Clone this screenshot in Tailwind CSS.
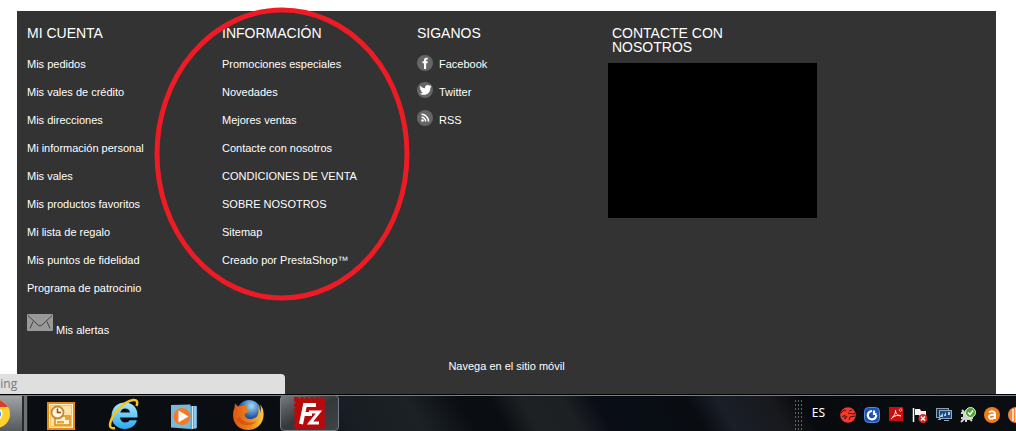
<!DOCTYPE html>
<html lang="es">
<head>
    <title>Tienda - pie de página</title>
    <meta charset="UTF-8" />
    <meta name="viewport" content="width=device-width, initial-scale=1.0"/>
    <script src="https://cdn.jsdelivr.net/npm/@tailwindcss/browser@4"></script>
</head>
<body class="relative flex h-screen flex-col overflow-hidden bg-white font-['Liberation_Sans',Arial,sans-serif]">

    <!-- Page footer -->
    <footer class="relative mt-[11px] mr-5 ml-[17px] flex-1 bg-[#333] pt-[15px] text-[11px] text-white">
        <div class="grid grid-cols-5 pr-1">
            <section class="pl-[10px]">
                <h2 class="mb-[10px] text-sm leading-[14px]">MI CUENTA</h2>
                <ul class="leading-7">
                    <li><a href="#">Mis pedidos</a></li>
                    <li><a href="#">Mis vales de crédito</a></li>
                    <li><a href="#">Mis direcciones</a></li>
                    <li><a href="#">Mi información personal</a></li>
                    <li><a href="#">Mis vales</a></li>
                    <li><a href="#">Mis productos favoritos</a></li>
                    <li><a href="#">Mi lista de regalo</a></li>
                    <li><a href="#">Mis puntos de fidelidad</a></li>
                    <li><a href="#">Programa de patrocinio</a></li>
                </ul>
                <a href="#" class="mt-3 flex items-end gap-[3px] leading-3">
                    <svg class="mb-[7px] h-[17px] w-[26px]" viewBox="0 0 26 17" fill="none">
                        <rect width="26" height="17" rx="1" fill="#999"/>
                        <path d="M1 1.500L11 11Q13 13 15 11L25 1.500" stroke="#444" stroke-width="1"/>
                        <path d="M3 14.500L6 7.500M23 14.500L20 7.500" stroke="#444" stroke-width="1"/>
                    </svg>
                    <span class="mb-[2px]">Mis alertas</span>
                </a>
            </section>

            <section class="pl-[10px]">
                <h2 class="mb-[10px] text-sm leading-[14px]">INFORMACIÓN</h2>
                <ul class="leading-7">
                    <li><a href="#">Promociones especiales</a></li>
                    <li><a href="#">Novedades</a></li>
                    <li><a href="#">Mejores ventas</a></li>
                    <li><a href="#">Contacte con nosotros</a></li>
                    <li><a href="#">CONDICIONES DE VENTA</a></li>
                    <li><a href="#">SOBRE NOSOTROS</a></li>
                    <li><a href="#">Sitemap</a></li>
                    <li><a href="#">Creado por PrestaShop™</a></li>
                </ul>
            </section>

            <section class="pl-[10px]">
                <h2 class="mb-[10px] text-sm leading-[14px]">SIGANOS</h2>
                <ul class="leading-7">
                    <li>
                        <a href="#" class="flex gap-[6px]">
                            <svg class="mt-[5px] size-4" viewBox="0 0 16 16">
                                <circle cx="8" cy="8" r="8" fill="#666"/>
                                <path d="M7 14V8.300H5.500V6.300H7V5C7 3.400 8 2.700 9.300 2.700H10.800V4.600H9.900C9.300 4.600 9.100 4.900 9.100 5.400V6.300H10.800L10.500 8.300H9.100V14Z" fill="#fff"/>
                            </svg>
                            Facebook
                        </a>
                    </li>
                    <li>
                        <a href="#" class="flex gap-[6px]">
                            <svg class="mt-1 size-4" viewBox="0 0 16 16">
                                <circle cx="8" cy="8" r="8" fill="#666"/>
                                <path d="M3 3.500C4.500 5.300 6 6 8 6.200C7.700 4.300 9 3 10.600 3C11.500 3 12 3.300 12.500 3.800L14 3.300L13.400 4.600L14.600 4.600L13.300 5.900C13.300 9.800 10.800 12.800 7 12.800C5.300 12.800 3.800 12.400 2.500 11.500C4 11.500 5 11.200 5.900 10.500C4.700 10.300 4 9.700 3.700 8.800H4.700C3.600 8.300 2.900 7.500 2.900 6.300L3.900 6.600C2.900 5.700 2.600 4.600 3 3.500Z" fill="#fff"/>
                            </svg>
                            Twitter
                        </a>
                    </li>
                    <li>
                        <a href="#" class="flex gap-[6px]">
                            <svg class="mt-1 size-4" viewBox="0 0 16 16" fill="none">
                                <circle cx="8" cy="8" r="8" fill="#666"/>
                                <circle cx="5.500" cy="10.500" r="1.300" fill="#fff"/>
                                <path d="M4.500 7.200A4 4 0 0 1 8.600 11.500M4.500 4.300A7 7 0 0 1 11.500 11.500" stroke="#fff" stroke-width="1.500"/>
                            </svg>
                            RSS
                        </a>
                    </li>
                </ul>
            </section>

            <section class="pl-[10px]">
                <h2 class="mb-[9px] text-sm leading-[14px]">CONTACTE CON NOSOTROS</h2>
                <div class="-ml-1 h-[155px] w-[209px] bg-black"></div>
            </section>
        </div>
        <p class="mt-[14px] text-center leading-7"><a href="#">Navega en el sitio móvil</a></p>
    </footer>

    <!-- Hand-drawn highlight -->
    <svg class="pointer-events-none absolute top-[7px] left-[154px] h-[294px] w-[256px]" viewBox="0 0 256 294" fill="none">
        <ellipse cx="128" cy="147" rx="125" ry="144" stroke="#ed1c24" stroke-width="5"/>
    </svg>

    <!-- Browser status bubble -->
    <div class="absolute bottom-[37px] left-0 flex h-5 w-[285px] justify-start overflow-hidden rounded-tr bg-[#dfdfdf] font-['Open_Sans','Noto_Sans',sans-serif] text-xs leading-5 text-[#777]">
        <span class="-ml-[7px]">ping</span>
    </div>

    <!-- Taskbar -->
    <nav class="flex h-[37px] shrink-0 items-stretch border-t border-black bg-[linear-gradient(60deg,#0a0e13_0%,#0a0e13_28%,#181d23_34%,#1c2125_41%,#0a0e12_46%,#0a0e12_49%,#1d2124_52%,#1c2023_56%,#0a0d17_59%,#090d12_68%,#1a1e27_71%,#17191d_76%,#080b0e_79%,#0a0e12_100%)] text-white shadow-[inset_0_1px_0_#7a8084]">
        <button aria-label="Chrome" class="mt-px w-6 overflow-hidden border-r-2 border-[#25292b] bg-linear-to-b from-[#a2a5a7] to-[#55595b]">
            <svg class="-ml-[18px] h-[28px] w-[28px] max-w-none" viewBox="0 0 28 28">
                <circle cx="14" cy="14" r="14" fill="#ffd12e"/>
                <path d="M1.900 7A14 14 0 0 1 26.100 7H14L8 17Z" fill="#dd3a2c"/>
                <path d="M1.900 7L9 18L14 21L11 28A14 14 0 0 1 1.900 7Z" fill="#3aa54a"/>
                <circle cx="14" cy="14" r="6.500" fill="#fff"/>
                <circle cx="14" cy="14" r="5" fill="#3d7fe0"/>
            </svg>
        </button>
        <div class="mt-px w-1 border-r border-[#222] bg-[#6e7274]"></div>

        <button aria-label="Outlook" class="ml-[19px] pt-[5px]">
            <svg class="size-7" viewBox="0 0 28 28" fill="none">
                <rect x="1" y="1" width="26" height="26" fill="#fff1cc" stroke="#e28b16" stroke-width="2"/>
                <rect x="3.500" y="3.500" width="21" height="21" fill="#fde3a4" stroke="#f6c45c"/>
                <rect x="8" y="14" width="15" height="9" fill="#fff3d5" stroke="#df8510" stroke-width="1.500"/>
                <path d="M10 19H17V21.500H10ZM18 15H22V18H18Z" fill="#eda52e"/>
                <circle cx="10.500" cy="10.500" r="6" fill="#fff6df" stroke="#c98735" stroke-width="1.800"/>
                <path d="M10.500 6.500V10.500H14" stroke="#86501b" stroke-width="1.500"/>
            </svg>
        </button>
        <button aria-label="Internet Explorer" class="ml-[33px] pt-[2px]">
            <svg class="h-8 w-[31px]" viewBox="0 0 31 32" fill="none">
                <defs>
                    <linearGradient id="ie" x1="0" y1="0" x2="0" y2="1">
                        <stop stop-color="#a9e9ff"/><stop offset="1" stop-color="#2ba7ee"/>
                    </linearGradient>
                </defs>
                <path d="M29.500 19.500H12C12.500 22.800 14.500 24.500 17.200 24.500C19.400 24.500 20.800 23.700 21.600 22.300H29C27.400 27.500 23.200 31 17 31C9 31 3.500 25.500 3.500 18C3.500 10.300 9 4.500 17 4.500C25.500 4.500 30.300 11 29.500 19.500ZM12.300 14.500H22C21.600 11.800 19.800 10.400 17.200 10.400C14.600 10.400 12.800 12 12.300 14.500Z" fill="url(#ie)"/>
                <path d="M7 30C3 31 1 29 2.500 24C5.500 14 16 3.500 25 2C29 1.400 30 4 28.500 8" stroke="#f6c61c" stroke-width="2.500"/>
            </svg>
        </button>
        <button aria-label="Windows Media Player" class="ml-8 pt-[8px]">
            <svg class="h-[26px] w-[27px]" viewBox="0 0 27 26">
                <path d="M6 2H26V24L20 25.500Z" fill="#5ba4cd"/>
                <path d="M21.500 2V25M24 2V24.500" stroke="#cdeafb" stroke-width="1"/>
                <path d="M0 1L19.500 .500V25L0 23.500Z" fill="#79b9d9"/>
                <circle cx="11" cy="12.500" r="8.500" fill="#f47a24"/>
                <path d="M7.500 6.500L17.500 12.500L7.500 18.500Z" fill="#fff"/>
            </svg>
        </button>
        <button aria-label="Firefox" class="ml-[34px] pt-[2px]">
            <svg class="h-[31px] w-8" viewBox="0 0 32 31">
                <defs>
                    <radialGradient id="globe" cx=".6" cy=".25">
                        <stop stop-color="#9fdcf6"/><stop offset="1" stop-color="#1d4f9e"/>
                    </radialGradient>
                    <linearGradient id="fox" x1="0" y1="0" x2="1" y2="0">
                        <stop stop-color="#dc5413"/><stop offset=".6" stop-color="#f18a1c"/><stop offset="1" stop-color="#fcca3c"/>
                    </linearGradient>
                </defs>
                <circle cx="17" cy="13" r="12" fill="url(#globe)"/>
                <path d="M3 4.500L6 7.500C8 6.500 10 6.500 11.500 7L15.500 5.500L14.500 9.500L17.500 12L13 14.500C12 17 14 19.500 17 20C20 20.500 23 19 25 17.500C27 14 27 10 25.500 7.500C27.500 9.500 28.500 12 28.500 14C29.500 11 29 7 27.500 5C30.500 8 32 11.500 31.500 17C31 25 24.500 31 16.500 31C7.500 31 1 25 1 16.500C1 13 1.500 11 2.500 9Z" fill="url(#fox)"/>
                <path d="M5 20C8 27 19 29 25 22C21 24 12 25 8 18Z" fill="#d1440e" opacity=".6"/>
            </svg>
        </button>
        <button aria-label="FileZilla" class="ml-4 flex w-[59px] justify-center rounded-sm border border-[#777d80] bg-linear-to-br from-[#777c7e] via-[#34383b] to-[#3f4447] pt-px">
            <svg class="h-[33px] w-[32px]" viewBox="0 0 32 33" fill="none">
                <rect x="1.500" y="1.500" width="29" height="30" fill="#b80a0a"/>
                <rect x="1.500" y="1.500" width="29" height="30" stroke="#b80a0a" stroke-width="3" stroke-dasharray="3 2"/>
                <path d="M7 27L11 8H22M9 17H18" stroke="#fff" stroke-width="4"/>
                <path d="M15 15H25L16 26H25" stroke="#fff" stroke-width="3"/>
            </svg>
        </button>

        <!-- Notification area -->
        <div class="ml-auto flex items-center gap-2">
            <div class="mt-1 h-8 w-2 bg-[radial-gradient(circle,#5c6265_1px,transparent_1px)] bg-[size:3px_4px]"></div>
            <span class="mr-[7px] ml-[2px] font-['Noto_Sans',sans-serif] text-xs">ES</span>
            <button aria-label="Antivirus" class="mt-1">
                <svg class="size-4" viewBox="0 0 16 16" fill="none">
                    <circle cx="8" cy="8" r="7.800" fill="#f23a30"/>
                    <path d="M1 6L4 3L6 4M9 4L12 3M2 10L5 8V12L7 9M8 6L13 7L15 6M9 13L10 10L15 9" stroke="#4a0d0a" stroke-width="1"/>
                </svg>
            </button>
            <button aria-label="Sincronización" class="mt-1">
                <svg class="size-4" viewBox="0 0 16 16" fill="none">
                    <rect x=".5" y=".5" width="15" height="15" rx="4" fill="#1d55ae" stroke="#5c8bd2"/>
                    <path d="M8 4A4.200 4.200 0 1 0 12.200 8M10 3.500V7H12.500" stroke="#fff" stroke-width="2.200"/>
                </svg>
            </button>
            <button aria-label="Adobe Reader" class="mt-px">
                <svg class="h-[14px] w-4" viewBox="0 0 16 14" fill="none">
                    <rect x="1" width="14" height="14" fill="#c70f0f"/>
                    <path d="M3 12C6 10 8 5 7.500 3C7.500 6 9 8.500 13 9M4 10.500C7 8.500 10 8 13 8.500" stroke="#fff" stroke-width="1"/>
                    <circle cx="12.500" cy="3" r="1.300" stroke="#f5b5b5" stroke-width=".8"/>
                </svg>
            </button>
            <button aria-label="Centro de actividades" class="mt-1">
                <svg class="size-4" viewBox="0 0 16 16" fill="none">
                    <path d="M1.500 1V15" stroke="#fff" stroke-width="1.500"/>
                    <path d="M3 2H8L9 4H14V10H8L7 8H3Z" fill="#f4f4f4"/>
                    <circle cx="11" cy="11.500" r="4.500" fill="#d42a24"/>
                    <path d="M9 9.500L13 13.500M13 9.500L9 13.500" stroke="#fff" stroke-width="1.500"/>
                </svg>
            </button>
            <button aria-label="Red" class="mt-1">
                <svg class="size-4" viewBox="0 0 16 16">
                    <rect x=".5" y="1.500" width="12" height="9" fill="#17385f" stroke="#8ba0b2"/>
                    <rect x="3.500" y="3.500" width="12" height="8" fill="#1b4a86" stroke="#9aa8b4"/>
                    <path d="M4 9L7 6V10H4ZM8 8L10 5V9H8ZM12 5H14V8H12Z" fill="#a4cff2"/>
                    <path d="M2 12H5V13H2ZM8 13H13V14H8Z" fill="#9aa8b4"/>
                </svg>
            </button>
            <button aria-label="Estado del equipo" class="mt-1">
                <svg class="size-4" viewBox="0 0 16 16" fill="none">
                    <path d="M3 5H10V13H3Z" fill="#d3d3d3"/>
                    <path d="M1 6H12M1 15L6 10M2 3L12 14M6 3V15M1 11H13" stroke="#d3d3d3" stroke-width="2"/>
                    <circle cx="10.500" cy="5.500" r="5" fill="#48a52e" stroke="#dff0d9"/>
                    <path d="M8 5.500L10 7.500L13 3.500" stroke="#fff" stroke-width="1.600"/>
                </svg>
            </button>
            <button aria-label="avast!" class="mt-1">
                <svg class="size-4" viewBox="0 0 16 16" fill="none">
                    <circle cx="8" cy="8" r="8" fill="#ed7c1a"/>
                    <path d="M5 5.500C7 3.500 11 4 11 7V12M11 8C7 7 4.500 8.500 5 10.500C5.800 12.500 10 12 11 9.500" stroke="#fff" stroke-width="2"/>
                </svg>
            </button>
            <button aria-label="Otro programa" class="mt-1 w-2 overflow-hidden">
                <svg class="h-4 w-4 max-w-none" viewBox="0 0 16 16">
                    <circle cx="8" cy="8" r="8" fill="#f4853c"/>
                    <path d="M4 2H6V14H4ZM7 1H9V15H7Z" fill="#ffd7ba"/>
                </svg>
            </button>
        </div>
    </nav>
</body>
</html>
